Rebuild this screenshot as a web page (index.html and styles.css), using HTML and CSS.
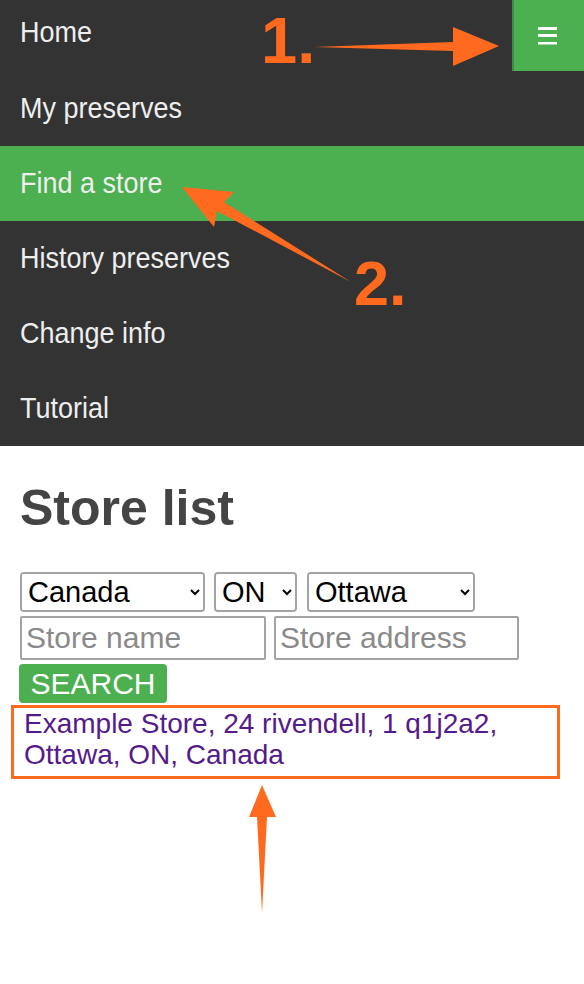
FILE: index.html
```html
<!DOCTYPE html>
<html lang="en">
<head>
<meta charset="utf-8">
<title>Store list</title>
<link rel="stylesheet" href="styles.css">
</head>
<body>
<nav class="nav">
  <div class="topbar">
    <a class="nav-item nav-home" href="#"><span class="nav-label">Home</span></a>
    <a class="menu-btn" href="#" aria-label="Menu">
      <svg width="20" height="18" viewBox="0 0 20 18"><rect x="0" y="0" width="19" height="3" fill="#ffffff"/><rect x="0" y="7" width="19" height="3" fill="#ffffff"/><rect x="0" y="15" width="19" height="2.5" fill="#ffffff"/></svg>
    </a>
  </div>
  <a class="nav-item" href="#"><span class="nav-label">My preserves</span></a>
  <a class="nav-item active" href="#"><span class="nav-label">Find a store</span></a>
  <a class="nav-item" href="#"><span class="nav-label">History preserves</span></a>
  <a class="nav-item" href="#"><span class="nav-label">Change info</span></a>
  <a class="nav-item" href="#"><span class="nav-label">Tutorial</span></a>
</nav>
<main class="content">
  <h1 class="title">Store list</h1>
  <form class="search-form">
    <div class="row">
      <span class="sel-wrap sel-country"><select class="sel"><option>Canada</option></select></span>
      <span class="sel-wrap sel-prov"><select class="sel"><option>ON</option></select></span>
      <span class="sel-wrap sel-city"><select class="sel"><option>Ottawa</option></select></span>
    </div>
    <div class="row row-inputs">
      <input class="txt txt-name" type="text" placeholder="Store name">
      <input class="txt txt-addr" type="text" placeholder="Store address">
    </div>
    <button class="search-btn" type="button">SEARCH</button>
  </form>
  <div class="result">
    <a class="result-link" href="#">Example Store, 24 rivendell, 1 q1j2a2, Ottawa, ON, Canada</a>
  </div>
</main>
<svg class="annot" width="584" height="984" viewBox="0 0 584 984">
  <text x="261" y="63" class="annot-num" font-size="65">1.</text>
  <polygon points="314,47 453,42 453,27 499,46 453,66 453,51" fill="#ff6a1f"/>
  <text x="354" y="305" class="annot-num" font-size="63">2.</text>
  <polygon points="351,282 217,211 214,227 182,187 234,192 224,202" fill="#ff6a1f"/>
  <polygon points="262,913 257,817 249,817 262,785 276,817 267,817" fill="#ff6a1f"/>
</svg>
</body>
</html>
```
FILE: styles.css
```css
html, body {
  margin: 0;
  padding: 0;
  background: #ffffff;
}
body {
  font-family: "Liberation Sans", Arial, sans-serif;
  position: relative;
  width: 584px;
  min-height: 984px;
  overflow: hidden;
}
.nav {
  background: #333333;
  display: flex;
  flex-direction: column;
}
.topbar {
  display: flex;
  height: 71px;
}
.nav-item {
  display: flex;
  align-items: center;
  height: 75px;
  padding-left: 20px;
  color: #eeeeee;
  text-decoration: none;
  font-family: "Liberation Sans", Arial, sans-serif;
  font-size: 27px;
}
.nav-label {
  display: inline-block;
  transform: scaleY(1.12);
  transform-origin: left center;
}
.nav-home {
  flex: 1;
  height: 71px;
  box-sizing: border-box;
  padding-bottom: 6px;
}
.nav-item.active {
  background: #4caf50;
}
.menu-btn {
  width: 72px;
  height: 71px;
  background: #4caf50;
  border-left: 2px solid #3e8e41;
  box-sizing: border-box;
  display: flex;
  align-items: center;
  justify-content: center;
  padding-right: 2px;
}
.menu-btn svg {
  display: block;
}
.content {
  padding: 0 0 0 20px;
}
.title {
  font-size: 50px;
  line-height: 50px;
  font-weight: bold;
  color: #444444;
  margin: 37px 0 39px 0;
}
.search-form {
  display: flex;
  flex-direction: column;
  align-items: flex-start;
  gap: 4px;
}
.row {
  display: flex;
  gap: 9px;
}
.row-inputs {
  gap: 8px;
}
.sel-wrap {
  display: block;
  height: 40px;
  box-sizing: border-box;
  border: 2px solid #a3a3a3;
  border-radius: 4px;
  background: #ffffff;
  overflow: hidden;
}
.sel {
  display: block;
  width: 100%;
  height: 36px;
  font-family: "Liberation Sans", Arial, sans-serif;
  font-size: 29px;
  border: none;
  outline: none;
  background-color: #ffffff;
  color: #000000;
  padding: 0 2px;
  margin: 0;
  box-sizing: border-box;
}
.sel-country { width: 185px; }
.sel-prov { width: 83px; }
.sel-city { width: 168px; margin-left: 1px; }
.txt {
  font-family: "Liberation Sans", Arial, sans-serif;
  font-size: 30px;
  height: 44px;
  border: 2px solid #a3a3a3;
  border-radius: 2px;
  padding: 0 4px;
  box-sizing: border-box;
  background: #ffffff;
}
.txt::placeholder {
  color: #8a8a8a;
}
.txt-name { width: 246px; }
.txt-addr { width: 245px; }
.search-btn {
  font-family: "Liberation Sans", Arial, sans-serif;
  font-size: 30px;
  color: #ffffff;
  background: #4caf50;
  border: none;
  border-radius: 4px;
  height: 39px;
  width: 148px;
  padding: 0;
  margin-left: -1px;
  line-height: 39px;
}
.result {
  margin: 2px 0 0 -9px;
  width: 549px;
  box-sizing: border-box;
  border: 3px solid #ff6a1f;
  padding: 0 10px 6px 10px;
  font-size: 28px;
  line-height: 31px;
}
.result-link {
  color: #551a8b;
  text-decoration: none;
}
.annot {
  position: absolute;
  left: 0;
  top: 0;
  pointer-events: none;
}
.annot-num {
  font-family: "Liberation Sans", Arial, sans-serif;
  font-weight: bold;
  fill: #ff6a1f;
}
```
